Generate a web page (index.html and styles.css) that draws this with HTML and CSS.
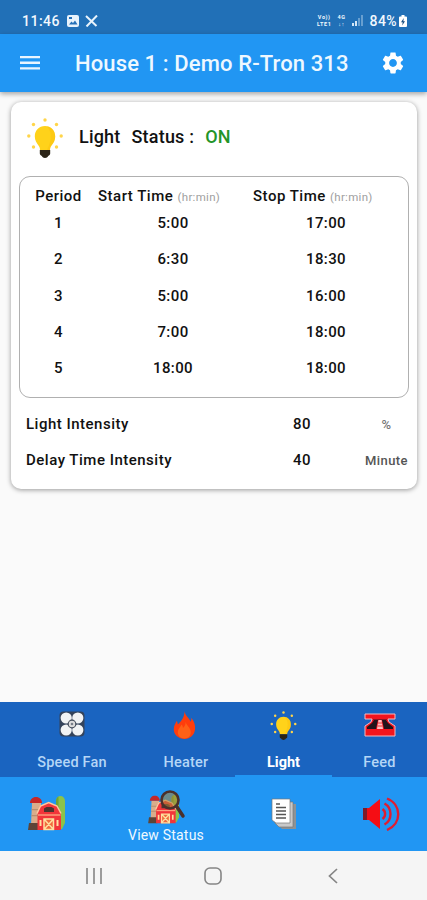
FILE: index.html
```html
<!DOCTYPE html>
<html lang="en">
  <head>
    <meta charset="utf-8">
    <meta name="viewport" content="width=device-width, initial-scale=1">
    <title>House 1 : Demo R-Tron 313</title>
    <link rel="stylesheet" href="styles.css">
  </head>
  <body>
    <svg class="defs" width="0" height="0">
      <symbol id="bulb" viewBox="0 0 36 40">
        <g fill="#ffd54a">
          <circle cx="18" cy="2" r="1.7"/>
          <circle cx="6.5" cy="6.5" r="1.7"/>
          <circle cx="29.5" cy="6.5" r="1.7"/>
          <circle cx="1.8" cy="18" r="1.7"/>
          <circle cx="34.2" cy="18" r="1.7"/>
          <circle cx="6.5" cy="29" r="1.7"/>
          <circle cx="29.5" cy="29" r="1.7"/>
        </g>
        <path fill="#ffd21a" d="M18 8C12 8 7.800 12.500 7.800 18.500c0 4 2 6.600 3.500 8.800 1 1.300 1.700 2.700 1.700 4.700h10c0-2 .7-3.400 1.700-4.700 1.800-2.200 3.500-4.800 3.500-8.800C28.200 12.500 24 8 18 8z"/>
        <path fill="#fbbc0a" d="M20 8.200c5 1 8.200 5 8.200 10.300 0 4-1.700 6.600-3.500 8.800-1 1.300-1.700 2.700-1.700 4.700h-3c4-8 6-17 0-23.800z" opacity=".4"/>
        <path fill="#2b2417" d="M12.800 32h10.400v3.500c0 1.300-1 2-2 2.500-.5 1.300-1.700 2-3.200 2s-2.700-.7-3.200-2c-1-.5-2-1.200-2-2.500z"/>
      </symbol>
      <symbol id="barn" viewBox="0 0 38 36">
        <path fill="#8bc34a" d="M28 34V6c0-3 2-5 4.500-5S37 3 37 6v22l-3 6z"/>
        <path fill="#6fa535" d="M28 34V6c0-2 1-4 2.500-4.500V34z"/>
        <path fill="#d9ad8b" d="M4 8h9v22H3z"/>
        <path fill="#b98e70" d="M3.700 14H13v1.200H3.600zM3.500 20H13v1.200H3.400z"/>
        <path fill="#c62828" d="M2 8c0-3.500 2.500-6 6-6s6 2.500 6 6z"/>
        <path fill="#5d4437" d="M1 28h10v7H0z"/>
        <path fill="#f2353a" d="M9.500 18L12 11l8.500-4L29 11l4 7v17H9.500z"/>
        <path fill="none" stroke="#ffc9a0" stroke-width="1.500" d="M9 18.500L12.500 11l8.200-3.500L29 11l4 7.500"/>
        <path fill="#4e342e" d="M16 17v-3.500l2.500-1.500h5l2.500 1.500V17z"/>
        <path stroke="#ffb58a" stroke-width="1.200" d="M10 20h22.500"/>
        <path fill="#f06a3c" stroke="#ffdf9e" stroke-width="1.500" d="M16 24h9.500v10.500H16zM16 24l9.500 10.500M25.500 24L16 34.500"/>
        <path fill="#ffdf9e" d="M11.500 25h2v6h-2zM28.500 25h2v6h-2z"/>
      </symbol>
    </svg>

    <div class="statusbar">
      <span class="clock">11:46</span>
      <svg width="12" height="12" viewBox="0 0 12 12">
        <rect width="12" height="12" rx="2" fill="#e8f3fc"/>
        <path fill="#2470b8" d="M2 9.500l2.500-3 1.500 1.500 2-2.500 2.500 4zM2 2h3v2H2z"/>
      </svg>
      <svg class="tools" width="13" height="12" viewBox="0 0 13 12">
        <path fill="none" stroke="#e8f3fc" stroke-width="2" d="M1 1l10.500 10M12 .5L1.500 11.500"/>
      </svg>
      <div class="signals">
        <div class="tiny"><span>Vo))</span><span>LTE1</span></div>
        <div class="tiny"><span>4G</span><span>↓↑</span></div>
        <svg width="12" height="11" viewBox="0 0 12 11" fill="#d4e6f6">
          <path d="M0 8h2v3H0zM3 6h2v5H3z"/>
          <path d="M6 3h2v8H6zM9 0h2v11H9z" opacity=".4"/>
        </svg>
        <span class="charge">84%</span>
        <svg width="8" height="12" viewBox="0 0 8 12">
          <path fill="#fff" d="M2.500 0h3v1.500H7a1 1 0 0 1 1 1V11a1 1 0 0 1-1 1H1a1 1 0 0 1-1-1V2.500a1 1 0 0 1 1-1h1.500z"/>
          <path fill="#174d80" d="M4.800 3L2 7.300h1.700L3.200 10.500 6 6.200H4.300z"/>
        </svg>
      </div>
    </div>

    <header class="appbar">
      <svg class="menu" width="20" height="14" viewBox="0 0 20 14">
        <path fill="#e9f5ff" d="M0 0h20v2.300H0zM0 5.600h20v2.300H0zM0 11.200h20v2.300H0z"/>
      </svg>
      <h1>House 1 : Demo R-Tron 313</h1>
      <svg class="gear" width="26" height="26" viewBox="0 0 24 24">
        <path fill="#fff" d="M19.140 12.940c.04-.3.060-.61.060-.94 0-.32-.02-.64-.07-.94l2.030-1.580c.18-.14.23-.41.120-.61l-1.920-3.320c-.12-.22-.37-.29-.59-.22l-2.390.96c-.5-.38-1.030-.7-1.620-.94l-.36-2.540c-.04-.24-.24-.41-.48-.41h-3.840c-.24 0-.43.17-.47.41l-.36 2.540c-.59.24-1.130.57-1.620.94l-2.390-.96c-.22-.08-.47 0-.59.22L2.740 8.870c-.12.21-.08.47.12.61l2.030 1.580c-.05.3-.09.63-.09.94s.02.64.07.94l-2.030 1.580c-.18.14-.23.41-.12.61l1.920 3.320c.12.22.37.29.59.22l2.390-.96c.5.38 1.030.7 1.620.94l.36 2.540c.05.24.24.41.48.41h3.840c.24 0 .44-.17.47-.41l.36-2.540c.59-.24 1.130-.56 1.620-.94l2.390.96c.22.08.47 0 .59-.22l1.920-3.320c.12-.22.07-.47-.12-.61l-2.010-1.580zM12 15.600c-1.980 0-3.600-1.620-3.600-3.600s1.620-3.600 3.600-3.600 3.600 1.620 3.600 3.600-1.620 3.600-3.600 3.600z"/>
      </svg>
    </header>

    <main>
      <section class="card">
        <div class="card-title">
          <svg width="36" height="40"><use href="#bulb"/></svg>
          <span class="name">Light</span>
          <span class="label">Status :</span>
          <span class="on">ON</span>
        </div>

        <div class="periods">
          <div class="row head">
            <span>Period</span>
            <span>Start Time <small>(hr:min)</small></span>
            <span>Stop Time <small>(hr:min)</small></span>
          </div>
          <div class="row"><span>1</span><span>5:00</span><span>17:00</span></div>
          <div class="row"><span>2</span><span>6:30</span><span>18:30</span></div>
          <div class="row"><span>3</span><span>5:00</span><span>16:00</span></div>
          <div class="row"><span>4</span><span>7:00</span><span>18:00</span></div>
          <div class="row"><span>5</span><span>18:00</span><span>18:00</span></div>
        </div>

        <div class="setting"><span>Light Intensity</span><b>80</b><i>%</i></div>
        <div class="setting"><span>Delay Time Intensity</span><b>40</b><i class="unit">Minute</i></div>
      </section>
    </main>

    <nav class="tabs">
      <a class="tab">
        <svg width="26" height="26" viewBox="0 0 26 26">
          <rect x=".5" y=".5" width="25" height="25" rx="4" fill="#34435a"/>
          <g fill="#f1f3f4">
            <circle cx="7.200" cy="7" r="5.600"/>
            <circle cx="18.800" cy="7" r="5.600"/>
            <circle cx="7.200" cy="19" r="5.600"/>
            <circle cx="18.800" cy="19" r="5.600"/>
          </g>
          <circle cx="13" cy="13" r="3.800" fill="#ddd" stroke="#4a5260" stroke-width="1.200"/>
          <circle cx="13" cy="13" r="1.300" fill="#777e89"/>
        </svg>
        <span>Speed Fan</span>
      </a>
      <a class="tab heater">
        <svg width="23" height="29" viewBox="0 0 24 30">
          <path fill="#ff3d0c" d="M12 0c1 5 5 7 6.500 11 .7-1 .8-2.500.5-4 3 3.500 4.500 7.500 4 12-.6 6-5 10-11 10S.8 25 .8 19c0-4 1.700-6 3.200-9 .6 1.300.8 2.500 1 4C9 10 12 6 12 0z"/>
          <path fill="#ff6117" d="M13 11c1 4 5.500 6 5.500 11 0 4-2.500 6.500-6.500 6.500S5 26 5 22c0-3.500 2.500-5 4-8 .8 1 1.300 2 1.400 3.500C12.500 15.500 13.500 13.500 13 11z"/>
        </svg>
        <span>Heater</span>
      </a>
      <a class="tab active">
        <svg width="27" height="29"><use href="#bulb"/></svg>
        <span>Light</span>
      </a>
      <a class="tab">
        <svg class="feed" width="32" height="24" viewBox="0 0 32 24">
          <path fill="#f5141c" stroke="#f2b8bf" d="M1 1h30v5h-7l1 3 6 4v10H1V13l6-4 1-3H1z"/>
          <path fill="#23141a" d="M10 7h4l-2 9H3v-2l5-4zM22 7h-4l2 9h9v-2l-5-4z"/>
          <path fill="#ffc1c1" d="M14.500 7h3l1.500 9h-6z"/>
          <path stroke="#e33" d="M14 10h4M13.500 13h5"/>
          <path stroke="#8f1421" d="M9 6.500h14"/>
        </svg>
        <span>Feed</span>
      </a>
    </nav>

    <nav class="bottom">
      <a class="item"><svg class="house" width="38" height="36"><use href="#barn"/></svg></a>
      <a class="item">
        <svg class="view" width="39" height="34" viewBox="0 0 39 34">
          <use href="#barn" y="4" width="34" height="30"/>
          <circle cx="23" cy="10" r="8.500" fill="#a98235" fill-opacity=".55" stroke="#4b302b" stroke-width="2.600"/>
          <path stroke="#4b302b" stroke-width="3.500" stroke-linecap="round" d="M30 17l6 9"/>
        </svg>
        <span>View Status</span>
      </a>
      <a class="item">
        <svg class="docs" width="25" height="31" viewBox="0 0 25 31">
          <path fill="#8d9295" d="M7 6h18v25H11l-4-4z"/>
          <path fill="#c9c9c9" stroke="#777" stroke-width=".7" d="M4 4h18v25H8l-4-4z"/>
          <path fill="#fff" stroke="#777" stroke-width=".7" d="M1 1h18v24H5l-4-3z"/>
          <path stroke="#555" stroke-width="1.300" d="M5 6h4M5 9.500h10M5 13h10M5 16.500h10M5 20h10"/>
        </svg>
      </a>
      <a class="item">
        <svg class="sound" width="38" height="34" viewBox="0 0 38 34">
          <path fill="#f50d14" d="M1 11h6L18 2v30L7 23H1z"/>
          <path fill="#7d1a2a" d="M1 11h4v12H1z"/>
          <g fill="none" stroke="#e01e30" stroke-width="2.400">
            <path d="M20.500 12c3.500 2.500 3.500 7.500 0 10"/>
            <path d="M22.500 6.500c8 4.500 8 16.500 0 21"/>
            <path d="M25 1.500c15 6 15 25.500 0 31.500"/>
          </g>
        </svg>
      </a>
    </nav>

    <div class="navbar">
      <svg class="recents" width="16" height="16" viewBox="0 0 16 16"><path stroke="#858585" stroke-width="1.600" d="M1 0v16M8 0v16M15 0v16"/></svg>
      <svg class="home" width="18" height="18" viewBox="0 0 18 18"><rect x="1" y="1" width="16" height="16" rx="5" fill="none" stroke="#858585" stroke-width="1.600"/></svg>
      <svg class="back" width="10" height="16" viewBox="0 0 10 16"><path fill="none" stroke="#858585" stroke-width="1.700" d="M9 1L1.500 8 9 15"/></svg>
    </div>
  </body>
</html>
```
FILE: styles.css
```css
:root {
  --blue: #2196f3;
  --dark-blue: #1a64c0;
  --status: #2170b7;
}

*, *:before, *:after {
  box-sizing: border-box;
}

body {
  margin: 0;
  height: 900px;
  display: flex;
  flex-direction: column;
  background: #fafafa;
  color: #111;
  font-family: Roboto, "Liberation Sans", sans-serif;
  font-weight: 500;
}

svg {
  display: block;
  flex: none;
}

.defs {
  position: absolute;
}

/*----- STATUS BAR -----*/

.statusbar {
  height: 34px;
  padding: 7px 20px 0 22px;
  display: flex;
  align-items: center;
  background: var(--status);
  color: #f1f8fe;
  font-size: 14px;
}

.clock {
  width: 39px;
  margin-right: 6px;
  letter-spacing: 0.5px;
}

.tools {
  margin-left: 6px;
}

.signals {
  margin-left: auto;
  display: flex;
  align-items: center;
}

.tiny {
  margin-right: 6px;
  display: flex;
  flex-direction: column;
  align-items: center;
  font-size: 5.5px;
  line-height: 7px;
  font-weight: 700;
  letter-spacing: 0.6px;
}

.charge {
  margin: 0 2px 0 6px;
  letter-spacing: 0.4px;
}

/*----- APP BAR -----*/

.appbar {
  position: relative;
  height: 58px;
  flex: none;
  padding: 0 21px 0 20px;
  display: flex;
  align-items: center;
  background: var(--blue);
  box-shadow: 0 2px 5px rgba(0,0,0,0.35);
}

.appbar h1 {
  margin: 0 auto 0 35px;
  color: #eef8ff;
  font-size: 22px;
  font-weight: 500;
  letter-spacing: 0.12px;
  white-space: nowrap;
}

/*----- CARD -----*/

main {
  flex: 1;
  padding: 10px 10px 0 11px;
}

.card {
  height: 387px;
  padding: 0 8px;
  border-radius: 10px;
  background: #fff;
  box-shadow: 0 1px 5px rgba(0,0,0,0.4);
}

.card-title {
  height: 74px;
  padding: 0 0 3px 8px;
  display: flex;
  align-items: center;
  font-size: 18px;
  letter-spacing: 0.2px;
}

.card-title span {
  margin-top: -2px;
}

.card-title .name {
  margin-left: 16px;
}

.card-title .label {
  margin: -2px 11px 0;
}

.card-title .on {
  color: #249428;
}

.periods {
  height: 222px;
  padding-top: 10px;
  border: 1px solid #b0b0b0;
  border-radius: 11px;
}

.row {
  height: 36.3px;
  display: grid;
  grid-template-columns: 77px 152px 154px;
  align-items: center;
  text-align: center;
  font-size: 15px;
  letter-spacing: 0.4px;
}

.row.head {
  height: 18px;
  grid-template-columns: 78px 155px 150px;
  align-items: baseline;
  line-height: 18px;
  letter-spacing: 0.5px;
  text-align: left;
  white-space: nowrap;
}

.row.head span:first-child {
  padding-right: 1px;
  text-align: center;
}

.row small {
  color: #a0a0a0;
  font-size: 11.5px;
  font-weight: 400;
  line-height: 1;
  letter-spacing: 0.3px;
}

.setting {
  height: 36.3px;
  padding-left: 7px;
  display: grid;
  grid-template-columns: 246px 60px 109px;
  align-items: center;
  font-size: 15px;
  letter-spacing: 0.5px;
}

.periods + .setting {
  margin-top: 8px;
}

.setting b {
  font-weight: 500;
  text-align: center;
}

.setting i {
  color: #777;
  font-size: 13px;
  font-style: normal;
  letter-spacing: 0.4px;
  text-align: center;
}

.setting .unit {
  color: #555;
}

/*----- TABS -----*/

.tabs {
  height: 75px;
  padding-left: 7px;
  display: grid;
  grid-template-columns: 130px 98px 97px 95px;
  background: var(--dark-blue);
  color: #b5d6f6;
  font-size: 14.5px;
  letter-spacing: 0.2px;
}

.tab {
  display: flex;
  flex-direction: column;
  align-items: center;
  justify-content: space-between;
  padding: 9px 0 4px;
  border-bottom: 2px solid transparent;
}

.tab.active {
  border-color: var(--blue);
  color: #fff;
  font-weight: 700;
  letter-spacing: 0;
}

.tab.heater svg {
  margin-right: 4px;
}

.feed {
  margin-top: 2px;
}

/*----- BOTTOM NAV -----*/

.bottom {
  height: 74px;
  display: grid;
  grid-template-columns: 94px 144px 90px 99px;
  background: var(--blue);
  color: #f0f9ff;
  font-size: 14px;
  font-weight: 400;
}

.item {
  display: flex;
  flex-direction: column;
  align-items: center;
  padding-top: 13px;
}

.item span {
  margin-top: 3px;
  letter-spacing: 0.2px;
}

.house {
  margin-top: 5px;
}

.docs {
  margin-top: 8px;
}

.sound {
  margin: 7px 0 0 6px;
}

/*----- ANDROID NAV -----*/

.navbar {
  height: 49px;
  display: flex;
  align-items: center;
  padding-left: 86px;
  background: #f5f5f5;
}

.home {
  margin-left: 102px;
}

.back {
  margin-left: 106px;
}
```
